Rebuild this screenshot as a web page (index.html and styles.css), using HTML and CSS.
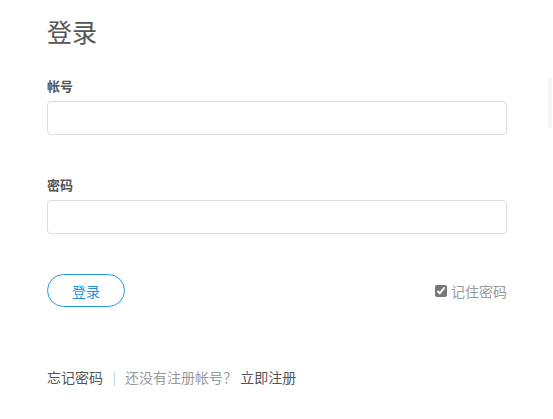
FILE: index.html
```html
<!DOCTYPE html>
<html lang="zh-CN">
<head>
  <meta charset="UTF-8" />
  <title>登录</title>
  <link rel="stylesheet" href="styles.css">
</head>
<body>
  <div class="login-box">
    <h2>登录</h2>

    <form class="login-form">
      <label for="account">帐号</label>
      <input type="text" id="account" name="account">

      <label for="password" class="second">密码</label>
      <input type="password" id="password" name="password">

      <div class="actions">
        <button type="submit">登录</button>
        <label class="remember"><input type="checkbox" checked> 记住密码</label>
      </div>
    </form>

    <div class="links">
      <a href="#" class="dark">忘记密码</a>
      <span class="sep">|</span>
      <span class="muted">还没有注册帐号？</span>
      <a href="#" class="dark">立即注册</a>
    </div>
  </div>
  <div class="edge"></div>
</body>
</html>
```

FILE: styles.css
```css
body {
  margin: 0;
  background: #fff;
  font-family: "Noto Sans CJK SC", "Noto Sans", sans-serif;
  color: #555;
}

.login-box {
  width: 460px;
  padding: 14px 0 0 47px;
}

h2 {
  margin: 0;
  font-size: 25px;
  font-weight: normal;
  line-height: 34px;
  color: #555;
}

.login-form label {
  display: block;
  font-size: 13px;
  font-weight: bold;
  line-height: 18px;
  margin-top: 29px;
  margin-bottom: 6px;
}

.login-form label.second {
  margin-top: 41px;
}

.login-form input[type="text"],
.login-form input[type="password"] {
  display: block;
  width: 100%;
  height: 34px;
  box-sizing: border-box;
  border: 1px solid #ddd;
  border-radius: 4px;
  padding: 6px 10px;
  font-size: 13px;
  outline: none;
}

.actions {
  display: flex;
  justify-content: space-between;
  align-items: center;
  margin-top: 40px;
}

.actions button {
  width: 78px;
  height: 33px;
  border: 1px solid #1d9be9;
  border-radius: 17px;
  background: #fff;
  color: #1d8fe0;
  font-family: inherit;
  font-size: 14px;
  cursor: pointer;
}

.actions .remember {
  display: flex;
  align-items: center;
  gap: 4px;
  margin: 0;
  font-weight: normal;
  font-size: 14px;
  color: #999;
}

.remember input {
  margin: 0;
  width: 12px;
  height: 12px;
  accent-color: #777;
}

.links {
  margin-top: 61px;
  font-size: 14px;
  line-height: 18px;
}

.links a {
  text-decoration: none;
}

.links .dark {
  color: #555;
}

.links .sep {
  color: #b4cfee;
  margin: 0 6px;
}

.links .muted {
  color: #999;
}

.edge {
  position: absolute;
  top: 78px;
  right: 1px;
  width: 4px;
  height: 50px;
  background: linear-gradient(to right, #fbfaf8, #f5f3ef);
}
```
